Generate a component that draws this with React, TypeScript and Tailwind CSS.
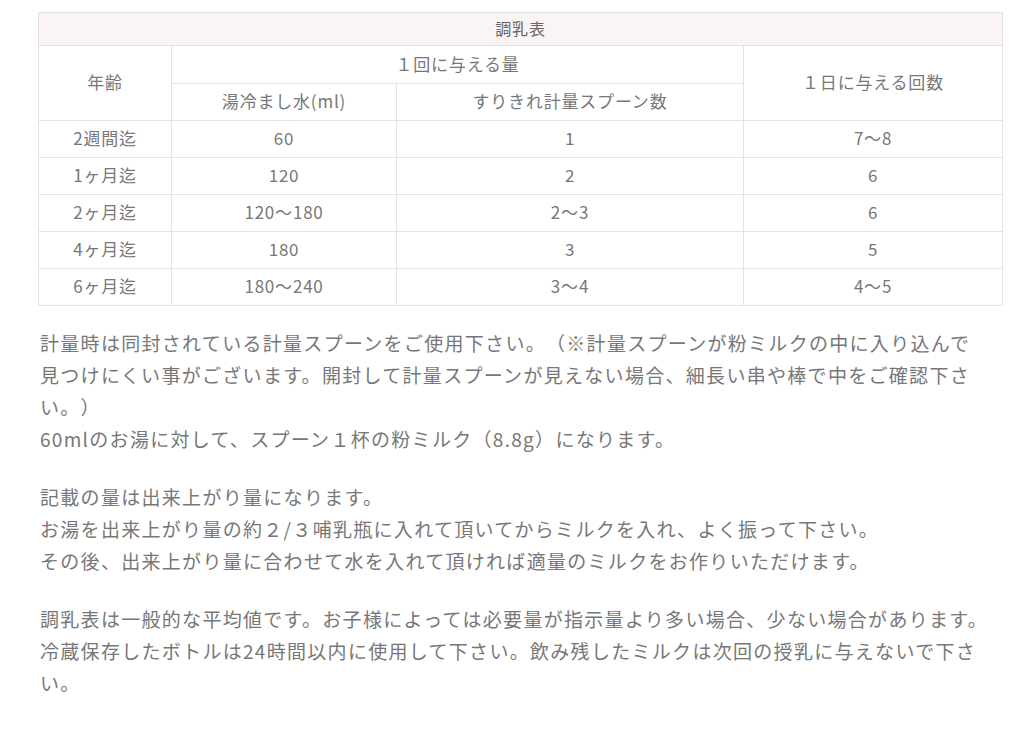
const rows = [
  ["2週間迄", "60", "1", "7〜8"],
  ["1ヶ月迄", "120", "2", "6"],
  ["2ヶ月迄", "120〜180", "2〜3", "6"],
  ["4ヶ月迄", "180", "3", "5"],
  ["6ヶ月迄", "180〜240", "3〜4", "4〜5"],
];

const cell = "border border-[#e3e3e3] text-center align-middle font-normal p-0 pb-[2px]";

export default function App() {
  return (
    <div
      className="w-[1024px] h-[754px] bg-white text-[#777777] overflow-hidden [text-spacing-trim:space-all]"
      style={{ fontFamily: '"Noto Sans CJK JP", "Noto Sans", sans-serif' }}
    >
      <div className="pt-[12px] pl-[38px]">
        <table className="border-collapse table-fixed w-[964px] text-[17px] tracking-[0.8px]">
          <colgroup>
            <col className="w-[133px]" />
            <col className="w-[225px]" />
            <col className="w-[347px]" />
            <col className="w-[259px]" />
          </colgroup>
          <thead>
            <tr className="h-[33px]">
              <th colSpan={4} className={`${cell} bg-[#fbf4f4] font-bold text-[#666666] text-[16px]`}>
                調乳表
              </th>
            </tr>
            <tr className="h-[38px]">
              <th rowSpan={2} className={cell}>年齢</th>
              <th colSpan={2} className={cell}>１回に与える量</th>
              <th rowSpan={2} className={cell}>１日に与える回数</th>
            </tr>
            <tr className="h-[37px]">
              <th className={cell}>湯冷まし水(ml)</th>
              <th className={cell}>すりきれ計量スプーン数</th>
            </tr>
          </thead>
          <tbody>
            {rows.map((r) => (
              <tr key={r[0]} className="h-[37px]">
                {r.map((c, i) => (
                  <td key={i} className={cell}>{c}</td>
                ))}
              </tr>
            ))}
          </tbody>
        </table>
      </div>

      <div className="pl-[40px] pt-[21px] text-[19px] leading-[32px] tracking-[1.3px] whitespace-nowrap">
        <p>
          計量時は同封されている計量スプーンをご使用下さい。（※計量スプーンが粉ミルクの中に入り込んで
          <br />
          見つけにくい事がございます。開封して計量スプーンが見えない場合、細長い串や棒で中をご確認下さ
          <br />
          い。）
          <br />
          60mlのお湯に対して、スプーン１杯の粉ミルク（8.8g）になります。
        </p>
        <p className="mt-[26px]">
          記載の量は出来上がり量になります。
          <br />
          お湯を出来上がり量の約２/３哺乳瓶に入れて頂いてからミルクを入れ、よく振って下さい。
          <br />
          その後、出来上がり量に合わせて水を入れて頂ければ適量のミルクをお作りいただけます。
        </p>
        <p className="mt-[26px]">
          調乳表は一般的な平均値です。お子様によっては必要量が指示量より多い場合、少ない場合があります。
          <br />
          冷蔵保存したボトルは24時間以内に使用して下さい。飲み残したミルクは次回の授乳に与えないで下さ
          <br />
          い。
        </p>
      </div>
    </div>
  );
}
